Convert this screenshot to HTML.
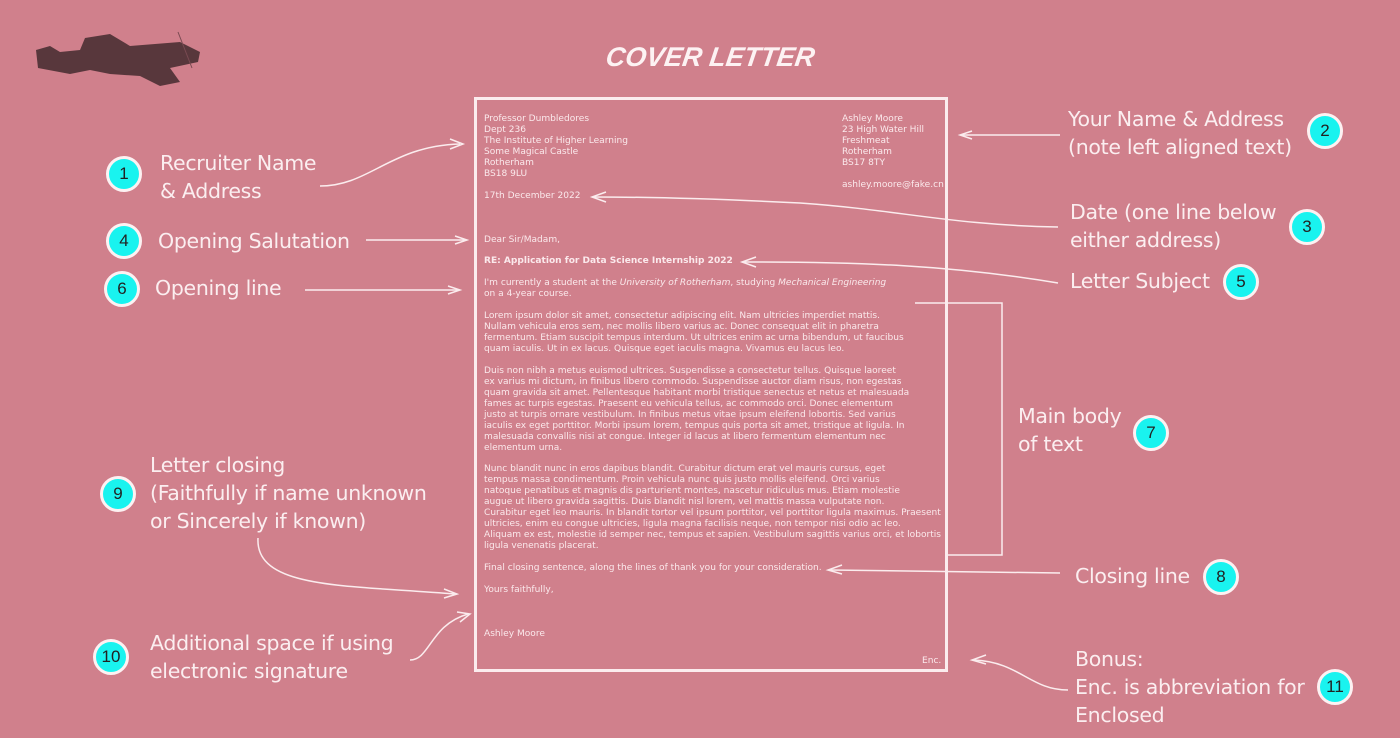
<!DOCTYPE html>
<html><head><meta charset="utf-8"><style>
body{margin:0;width:1400px;height:738px;background:#d0808c;position:relative;overflow:hidden;font-family:"DejaVu Sans","Liberation Sans",sans-serif;}
.t{position:absolute;color:#fbeef0;font-size:20.5px;line-height:28px;white-space:nowrap;font-family:"DejaVu Sans","Liberation Sans",sans-serif;letter-spacing:-0.3px;}
.c{position:absolute;width:30px;height:30px;border-radius:50%;background:#19f3ef;border:3px solid #fdf1f2;color:#222;font-size:17px;line-height:30px;text-align:center;font-family:"Liberation Sans",sans-serif;}
.box{position:absolute;left:474px;top:97px;width:468px;height:569px;border:3px solid #fbecee;}
.l{position:absolute;color:#fbe9ec;font-size:9.05px;line-height:11.05px;white-space:nowrap;}
.title{position:absolute;left:606px;top:42px;color:#fdf2f3;font:italic bold 27px "Liberation Sans",sans-serif;letter-spacing:0px;transform:skewX(-8deg);}
</style></head><body>
<div class="title">COVER LETTER</div>
<svg style="position:absolute;left:30px;top:30px" width="180" height="60" viewBox="0 0 180 60">
<path d="M6 20 L20 16 L30 22 L50 20 L55 8 L80 4 L100 16 L150 12 L170 22 L168 32 L140 38 L150 52 L130 56 L110 46 L80 44 L60 40 L40 44 L8 38 Z" fill="#3a2428" opacity="0.8"/>
<line x1="148" y1="2" x2="162" y2="38" stroke="#7a4a52" stroke-width="1"/>
</svg>
<div class="box"></div>
<div class="l" style="left:484px;top:114px">Professor Dumbledores<br>Dept 236<br>The Institute of Higher Learning<br>Some Magical Castle<br>Rotherham<br>BS18 9LU</div>
<div class="l" style="left:842px;top:114px">Ashley Moore<br>23 High Water Hill<br>Freshmeat<br>Rotherham<br>BS17 8TY<br><br>ashley.moore@fake.cn</div>
<div class="l" style="left:484px;top:191px">17th December 2022</div>
<div class="l" style="left:484px;top:235px">Dear Sir/Madam,</div>
<div class="l" style="left:484px;top:256px;font-weight:bold">RE: Application for Data Science Internship 2022</div>
<div class="l" style="left:484px;top:278px">I'm currently a student at the <i>University of Rotherham</i>, studying <i>Mechanical Engineering</i><br>on a 4-year course.</div>
<div class="l" style="left:484px;top:311px">Lorem ipsum dolor sit amet, consectetur adipiscing elit. Nam ultricies imperdiet mattis.<br>Nullam vehicula eros sem, nec mollis libero varius ac. Donec consequat elit in pharetra<br>fermentum. Etiam suscipit tempus interdum. Ut ultrices enim ac urna bibendum, ut faucibus<br>quam iaculis. Ut in ex lacus. Quisque eget iaculis magna. Vivamus eu lacus leo.</div>
<div class="l" style="left:484px;top:366px">Duis non nibh a metus euismod ultrices. Suspendisse a consectetur tellus. Quisque laoreet<br>ex varius mi dictum, in finibus libero commodo. Suspendisse auctor diam risus, non egestas<br>quam gravida sit amet. Pellentesque habitant morbi tristique senectus et netus et malesuada<br>fames ac turpis egestas. Praesent eu vehicula tellus, ac commodo orci. Donec elementum<br>justo at turpis ornare vestibulum. In finibus metus vitae ipsum eleifend lobortis. Sed varius<br>iaculis ex eget porttitor. Morbi ipsum lorem, tempus quis porta sit amet, tristique at ligula. In<br>malesuada convallis nisi at congue. Integer id lacus at libero fermentum elementum nec<br>elementum urna.</div>
<div class="l" style="left:484px;top:464px">Nunc blandit nunc in eros dapibus blandit. Curabitur dictum erat vel mauris cursus, eget<br>tempus massa condimentum. Proin vehicula nunc quis justo mollis eleifend. Orci varius<br>natoque penatibus et magnis dis parturient montes, nascetur ridiculus mus. Etiam molestie<br>augue ut libero gravida sagittis. Duis blandit nisl lorem, vel mattis massa vulputate non.<br>Curabitur eget leo mauris. In blandit tortor vel ipsum porttitor, vel porttitor ligula maximus. Praesent<br>ultricies, enim eu congue ultricies, ligula magna facilisis neque, non tempor nisi odio ac leo.<br>Aliquam ex est, molestie id semper nec, tempus et sapien. Vestibulum sagittis varius orci, et lobortis<br>ligula venenatis placerat.</div>
<div class="l" style="left:484px;top:563px">Final closing sentence, along the lines of thank you for your consideration.</div>
<div class="l" style="left:484px;top:585px">Yours faithfully,</div>
<div class="l" style="left:484px;top:629px">Ashley Moore</div>
<div class="l" style="left:922px;top:656px">Enc.</div>

<svg style="position:absolute;left:0;top:0" width="1400" height="738" fill="none" stroke="#fbecee" stroke-width="1.5">
<path d="M320 186 C370 186 390 146 460 144"/><path d="M450 139 L463 144 L450 149"/>
<path d="M366 240 L465 240"/><path d="M455 236 L467 240 L455 244"/>
<path d="M305 290 L458 290"/><path d="M448 286 L460 290 L448 294"/>
<path d="M1060 135 L962 135"/><path d="M972 131 L960 135 L972 139"/>
<path d="M1058 227 C950 225 900 210 800 203 C700 198 640 197 594 197"/><path d="M606 192 L592 197 L606 202"/>
<path d="M1058 283 C950 265 860 262 744 262"/><path d="M756 257 L742 262 L756 267"/>
<path d="M915 303 L1002 303 L1002 555 L947 555"/>
<path d="M1060 573 L830 570"/><path d="M842 565 L828 570 L842 574"/>
<path d="M258 538 C255 590 350 585 455 594"/><path d="M444 589 L457 594 L444 598"/>
<path d="M410 660 C430 660 430 625 468 614"/><path d="M457 612 L470 614 L460 622"/>
<path d="M1068 690 C1030 690 1020 662 974 660"/><path d="M986 655 L972 660 L986 664"/>
</svg>

<div class="c" style="left:106px;top:156px">1</div>
<div class="c" style="left:106px;top:223px">4</div>
<div class="c" style="left:104px;top:271px">6</div>
<div class="c" style="left:100px;top:476px">9</div>
<div class="c" style="left:93px;top:639px">10</div>
<div class="c" style="left:1307px;top:113px">2</div>
<div class="c" style="left:1289px;top:209px">3</div>
<div class="c" style="left:1223px;top:264px">5</div>
<div class="c" style="left:1133px;top:415px">7</div>
<div class="c" style="left:1203px;top:559px">8</div>
<div class="c" style="left:1317px;top:669px">11</div>

<div class="t" style="left:160px;top:149px">Recruiter Name<br>&amp; Address</div>
<div class="t" style="left:158px;top:227px">Opening Salutation</div>
<div class="t" style="left:155px;top:274px">Opening line</div>
<div class="t" style="left:150px;top:451px">Letter closing<br>(Faithfully if name unknown<br>or Sincerely if known)</div>
<div class="t" style="left:150px;top:629px">Additional space if using<br>electronic signature</div>
<div class="t" style="left:1068px;top:105px">Your Name &amp; Address<br>(note left aligned text)</div>
<div class="t" style="left:1070px;top:198px">Date (one line below<br>either address)</div>
<div class="t" style="left:1070px;top:267px">Letter Subject</div>
<div class="t" style="left:1018px;top:402px">Main body<br>of text</div>
<div class="t" style="left:1075px;top:562px">Closing line</div>
<div class="t" style="left:1075px;top:645px">Bonus:<br>Enc. is abbreviation for<br>Enclosed</div>
</body></html>
